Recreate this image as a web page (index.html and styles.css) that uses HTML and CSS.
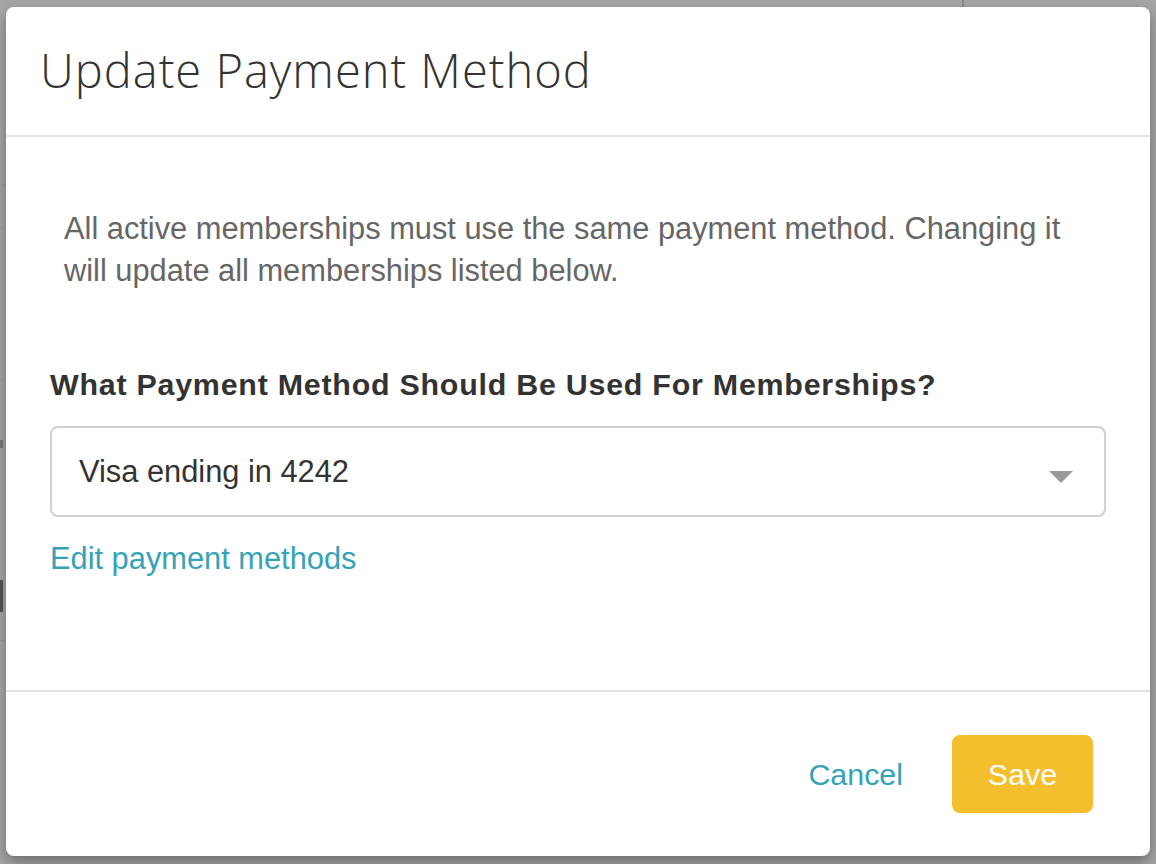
FILE: index.html
```html
<!DOCTYPE html>
<html lang="en">
<head>
<meta charset="utf-8">
<title>Update Payment Method</title>
<link rel="stylesheet" href="styles.css">
</head>
<body>
<div class="backdrop">
  <div class="bg-line l1"></div>
  <div class="bg-line l2"></div>
  <div class="bg-line l3"></div>
  <div class="bg-line l4"></div>
  <div class="bg-mark m1"></div>
  <div class="bg-mark m2"></div>
  <div class="bg-vline"></div>
  <div class="modal">
    <div class="modal-header">
      <h1 class="modal-title">Update Payment Method</h1>
    </div>
    <div class="modal-body">
      <p class="intro">All active memberships must use the same payment method. Changing it will update all memberships listed below.</p>
      <label class="field-label">What Payment Method Should Be Used For Memberships?</label>
      <div class="select">
        <span class="select-value">Visa ending in 4242</span>
        <svg class="caret" width="24" height="12" viewBox="0 0 24 12"><polygon points="0,0 24,0 12,12" fill="#999"/></svg>
      </div>
      <a class="edit-link" href="#">Edit payment methods</a>
    </div>
    <div class="modal-footer">
      <a class="btn-cancel" href="#">Cancel</a>
      <button class="btn-save">Save</button>
    </div>
  </div>
</div>
</body>
</html>
```

FILE: styles.css
```css
* { box-sizing: border-box; }
html, body { margin: 0; padding: 0; }
body {
  background: #a6a6a6;
  font-family: "Liberation Sans", Arial, sans-serif;
}
.backdrop {
  position: relative;
  width: 1156px;
  height: 864px;
  overflow: hidden;
  padding: 7px 6px 8px 6px;
  background: #a6a6a6;
}
.bg-line {
  position: absolute;
  left: 0;
  width: 6px;
  height: 1px;
  background: #969696;
}
.l1 { top: 185px; }
.l2 { top: 227px; }
.l3 { top: 380px; }
.l4 { top: 640px; }
.bg-mark {
  position: absolute;
  left: 0;
  width: 3px;
  background: #555;
}
.m1 { top: 440px; height: 8px; background: #7a7a7a; }
.m2 { top: 580px; height: 32px; }
.bg-vline {
  position: absolute;
  left: 962px;
  top: 0;
  width: 2px;
  height: 7px;
  background: #8a8a8a;
}
.modal {
  position: relative;
  width: 1144px;
  height: 849px;
  background: #fff;
  border-radius: 8px;
  box-shadow: 0 6px 14px rgba(0,0,0,0.35);
  display: flex;
  flex-direction: column;
}
.modal-header {
  height: 130px;
  border-bottom: 2px solid #e3e3e3;
  padding: 0 0 0 34px;
}
.modal-title {
  margin: 0;
  padding-top: 31px;
  font-family: "Open Sans", sans-serif;
  font-weight: 300;
  font-size: 47px;
  line-height: 64px;
  color: #333;
  letter-spacing: 1px;
}
.modal-body {
  flex: 1;
  padding: 71px 44px 0 44px;
  display: flex;
  flex-direction: column;
  align-items: flex-start;
}
.intro {
  margin: 0 0 0 14px;
  font-size: 30.8px;
  line-height: 42px;
  color: #666;
  max-width: 1010px;
}
.field-label {
  display: block;
  margin-top: 74px;
  font-size: 30.4px;
  line-height: 36px;
  font-weight: bold;
  color: #333;
  letter-spacing: 0.76px;
}
.select {
  margin-top: 24px;
  width: 1056px;
  height: 91px;
  border: 2px solid #d0d0d0;
  border-radius: 8px;
  display: flex;
  align-items: center;
  justify-content: space-between;
  padding: 0 31px 0 27px;
}
.select-value {
  font-size: 30.8px;
  line-height: 36px;
  color: #333;
}
.caret { display: block; margin-top: 10px; }
.edit-link {
  margin-top: 24px;
  font-size: 30.8px;
  line-height: 36px;
  color: #35a3b7;
  text-decoration: none;
}
.modal-footer {
  height: 166px;
  border-top: 2px solid #e3e3e3;
  display: flex;
  align-items: center;
  justify-content: flex-end;
  padding: 0 57px 1px 0;
  gap: 49px;
}
.btn-cancel {
  font-size: 30.4px;
  line-height: 36px;
  color: #35a3b7;
  text-decoration: none;
}
.btn-save {
  width: 141px;
  height: 78px;
  border: none;
  border-radius: 8px;
  background: #f5be2c;
  color: #fff;
  font-family: "Liberation Sans", Arial, sans-serif;
  font-size: 30.4px;
  line-height: 36px;
  padding: 0;
}
```
